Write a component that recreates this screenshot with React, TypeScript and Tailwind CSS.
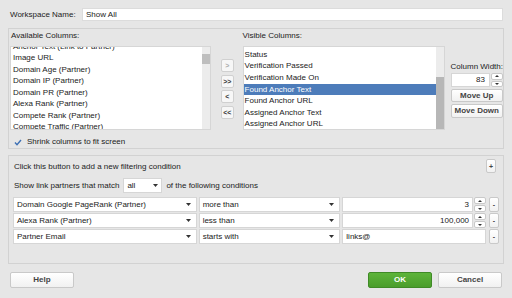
import React from "react";

const AVAILABLE = [
  "Anchor Text (Link to Partner)",
  "Image URL",
  "Domain Age (Partner)",
  "Domain IP (Partner)",
  "Domain PR (Partner)",
  "Alexa Rank (Partner)",
  "Compete Rank (Partner)",
  "Compete Traffic (Partner)",
];

const VISIBLE = [
  "Status",
  "Verification Passed",
  "Verification Made On",
  "Found Anchor Text",
  "Found Anchor URL",
  "Assigned Anchor Text",
  "Assigned Anchor URL",
];

const CONDITIONS = [
  { field: "Domain Google PageRank (Partner)", op: "more than", value: "3", spin: true },
  { field: "Alexa Rank (Partner)", op: "less than", value: "100,000", spin: true },
  { field: "Partner Email", op: "starts with", value: "links@", spin: false },
];

function Caret() {
  return (
    <svg width="5" height="3" viewBox="0 0 5 3" className="shrink-0">
      <path d="M0 0h5L2.5 3z" fill="#333" />
    </svg>
  );
}

function Spinner() {
  return (
    <div className="flex flex-col w-[12px] h-full ml-[1px] gap-[1px]">
      <div className="flex-1 grid place-items-center bg-white border border-[#c9c9c9] rounded-[2px]">
        <svg width="4" height="2" viewBox="0 0 4 2">
          <path d="M0 2h4L2 0z" fill="#333" />
        </svg>
      </div>
      <div className="flex-1 grid place-items-center bg-white border border-[#c9c9c9] rounded-[2px]">
        <svg width="4" height="2" viewBox="0 0 4 2">
          <path d="M0 0h4L2 2z" fill="#333" />
        </svg>
      </div>
    </div>
  );
}

function SmallBtn({ children, dim }: { children: React.ReactNode; dim?: boolean }) {
  return (
    <div
      className={`grid place-items-center w-[13px] h-[13px] rounded-[2px] border border-[#d0d0d0] bg-[#f7f7f7] text-[7px] font-bold leading-none ${
        dim ? "text-[#aaa]" : "text-[#333]"
      }`}
    >
      {children}
    </div>
  );
}

function Btn({ children, className = "" }: { children: React.ReactNode; className?: string }) {
  return (
    <div
      className={`grid place-items-center rounded-[2px] border border-[#c9c9c9] bg-gradient-to-b from-white to-[#f1f1f1] font-bold text-[#444] ${className}`}
    >
      {children}
    </div>
  );
}

export default function App() {
  return (
    <div
      className="w-[512px] h-[298px] bg-[#e6e6e6] text-[#222] text-[8px] leading-none overflow-hidden"
      style={{ fontFamily: "'Liberation Sans', Arial, sans-serif" }}
    >
      {/* Workspace name */}
      <div className="flex items-center pt-[8px] pl-[10px] pr-[9px]">
        <span className="w-[72px]">Workspace Name:</span>
        <div className="flex-1 h-[13px] bg-white border border-[#dcdcdc] flex items-center px-[3px]">Show All</div>
      </div>

      {/* Columns panel */}
      <div className="mt-[7px] mx-[8px] h-[121px] border border-[#d2d2d2] pl-[1px] pt-[2px]">
        <div className="flex">
          <div className="flex flex-col w-[203px]">
            <span className="h-[8px] mb-[6px] mt-[1px] ml-[1px]">Available Columns:</span>
            <div className="relative h-[84px] bg-white border border-[#d6d6d6] overflow-hidden flex">
              <div className="flex-1 -mt-[6px] pl-[2px]">
                {AVAILABLE.map((c) => (
                  <div key={c} className="h-[11.5px] flex items-center whitespace-nowrap">{c}</div>
                ))}
              </div>
              <div className="w-[8px] bg-[#ececec] pt-[7px]">
                <div className="h-[10px] bg-[#bebebe]" />
              </div>
            </div>
          </div>

          <div className="flex flex-col items-center gap-[2.5px] w-[32px] pt-[28px] pl-[1px]">
            <SmallBtn dim>&gt;</SmallBtn>
            <SmallBtn>&gt;&gt;</SmallBtn>
            <SmallBtn>&lt;</SmallBtn>
            <SmallBtn>&lt;&lt;</SmallBtn>
          </div>

          <div className="flex flex-col w-[204px]">
            <span className="h-[8px] mb-[6px] mt-[1px]">Visible Columns:</span>
            <div className="h-[84px] bg-white border border-[#d6d6d6] overflow-hidden flex">
              <div className="flex-1 pt-[2px]">
                {VISIBLE.map((c) => (
                  <div
                    key={c}
                    className={`h-[11.6px] flex items-center whitespace-nowrap pl-[1px] ${
                      c === "Found Anchor Text" ? "bg-[#4d7cba] text-white" : ""
                    }`}
                  >
                    {c}
                  </div>
                ))}
              </div>
              <div className="w-[8px] bg-[#ececec] pt-[30px]">
                <div className="h-[52px] bg-[#b7b7b7]" />
              </div>
            </div>
          </div>

          <div className="flex flex-col w-[53px] ml-[6px] pt-[32px]">
            <span className="h-[8px] mb-[2px] whitespace-nowrap">Column Width:</span>
            <div className="flex h-[14px]">
              <div className="flex-1 bg-white border border-[#d6d6d6] flex items-center justify-end pr-[4px]">83</div>
              <Spinner />
            </div>
            <Btn className="h-[13px] mt-[2px]">Move Up</Btn>
            <Btn className="h-[14px] mt-[2px]">Move Down</Btn>
          </div>
        </div>

        <div className="flex items-center mt-[8px] ml-[4px] gap-[5px]">
          <svg width="8" height="7" viewBox="0 0 8 7">
            <path d="M1 3.5l2 2.2L7 1" stroke="#3c6fb4" strokeWidth="1.4" fill="none" />
          </svg>
          <span>Shrink columns to fit screen</span>
        </div>
      </div>

      {/* Filter panel */}
      <div className="mt-[6px] mx-[8px] h-[109px] border border-[#d2d2d2] px-[4px] pt-[3px]">
        <div className="flex items-center justify-between h-[14px]">
          <span className="ml-[1px] mt-[2px]">Click this button to add a new filtering condition</span>
          <Btn className="w-[10px] h-[14px] text-[7px] mr-[3px]">+</Btn>
        </div>

        <div className="flex items-center mt-[5px] h-[15px] ml-[1px]">
          <span>Show link partners that match</span>
          <div className="ml-[4px] w-[39px] h-[15px] bg-white border border-[#d6d6d6] flex items-center justify-between px-[3px]">
            <span>all</span>
            <Caret />
          </div>
          <span className="ml-[4px]">of the following conditions</span>
        </div>

        <div className="flex flex-col gap-[1px] mt-[4px]">
          {CONDITIONS.map((c) => (
            <div key={c.field} className="flex h-[15px]">
              <div className="w-[184px] bg-white border border-[#d6d6d6] flex items-center justify-between pl-[3px] pr-[5px]">
                <span>{c.field}</span>
                <Caret />
              </div>
              <div className="w-[142px] ml-[2px] bg-white border border-[#d6d6d6] flex items-center justify-between pl-[3px] pr-[5px]">
                <span>{c.op}</span>
                <Caret />
              </div>
              <div className="flex ml-[2px] w-[144px]">
                <div
                  className={`flex-1 bg-white border border-[#d6d6d6] flex items-center px-[3px] ${
                    c.spin ? "justify-end" : ""
                  }`}
                >
                  {c.value}
                </div>
                {c.spin && <Spinner />}
              </div>
              <Btn className="w-[10px] ml-[3px] text-[7px] items-end pb-[3px]">-</Btn>
            </div>
          ))}
        </div>
      </div>

      {/* Footer buttons */}
      <div className="flex items-center mt-[8px] px-[10px] h-[16px]">
        <Btn className="w-[64px] h-[16px]">Help</Btn>
        <div className="flex-1" />
        <div className="grid place-items-center w-[64px] h-[16px] rounded-[2px] border border-[#3f8a26] bg-gradient-to-b from-[#5db43a] to-[#4a9d2b] text-white font-bold">
          OK
        </div>
        <Btn className="w-[64px] h-[16px] ml-[6px]">Cancel</Btn>
      </div>
    </div>
  );
}
